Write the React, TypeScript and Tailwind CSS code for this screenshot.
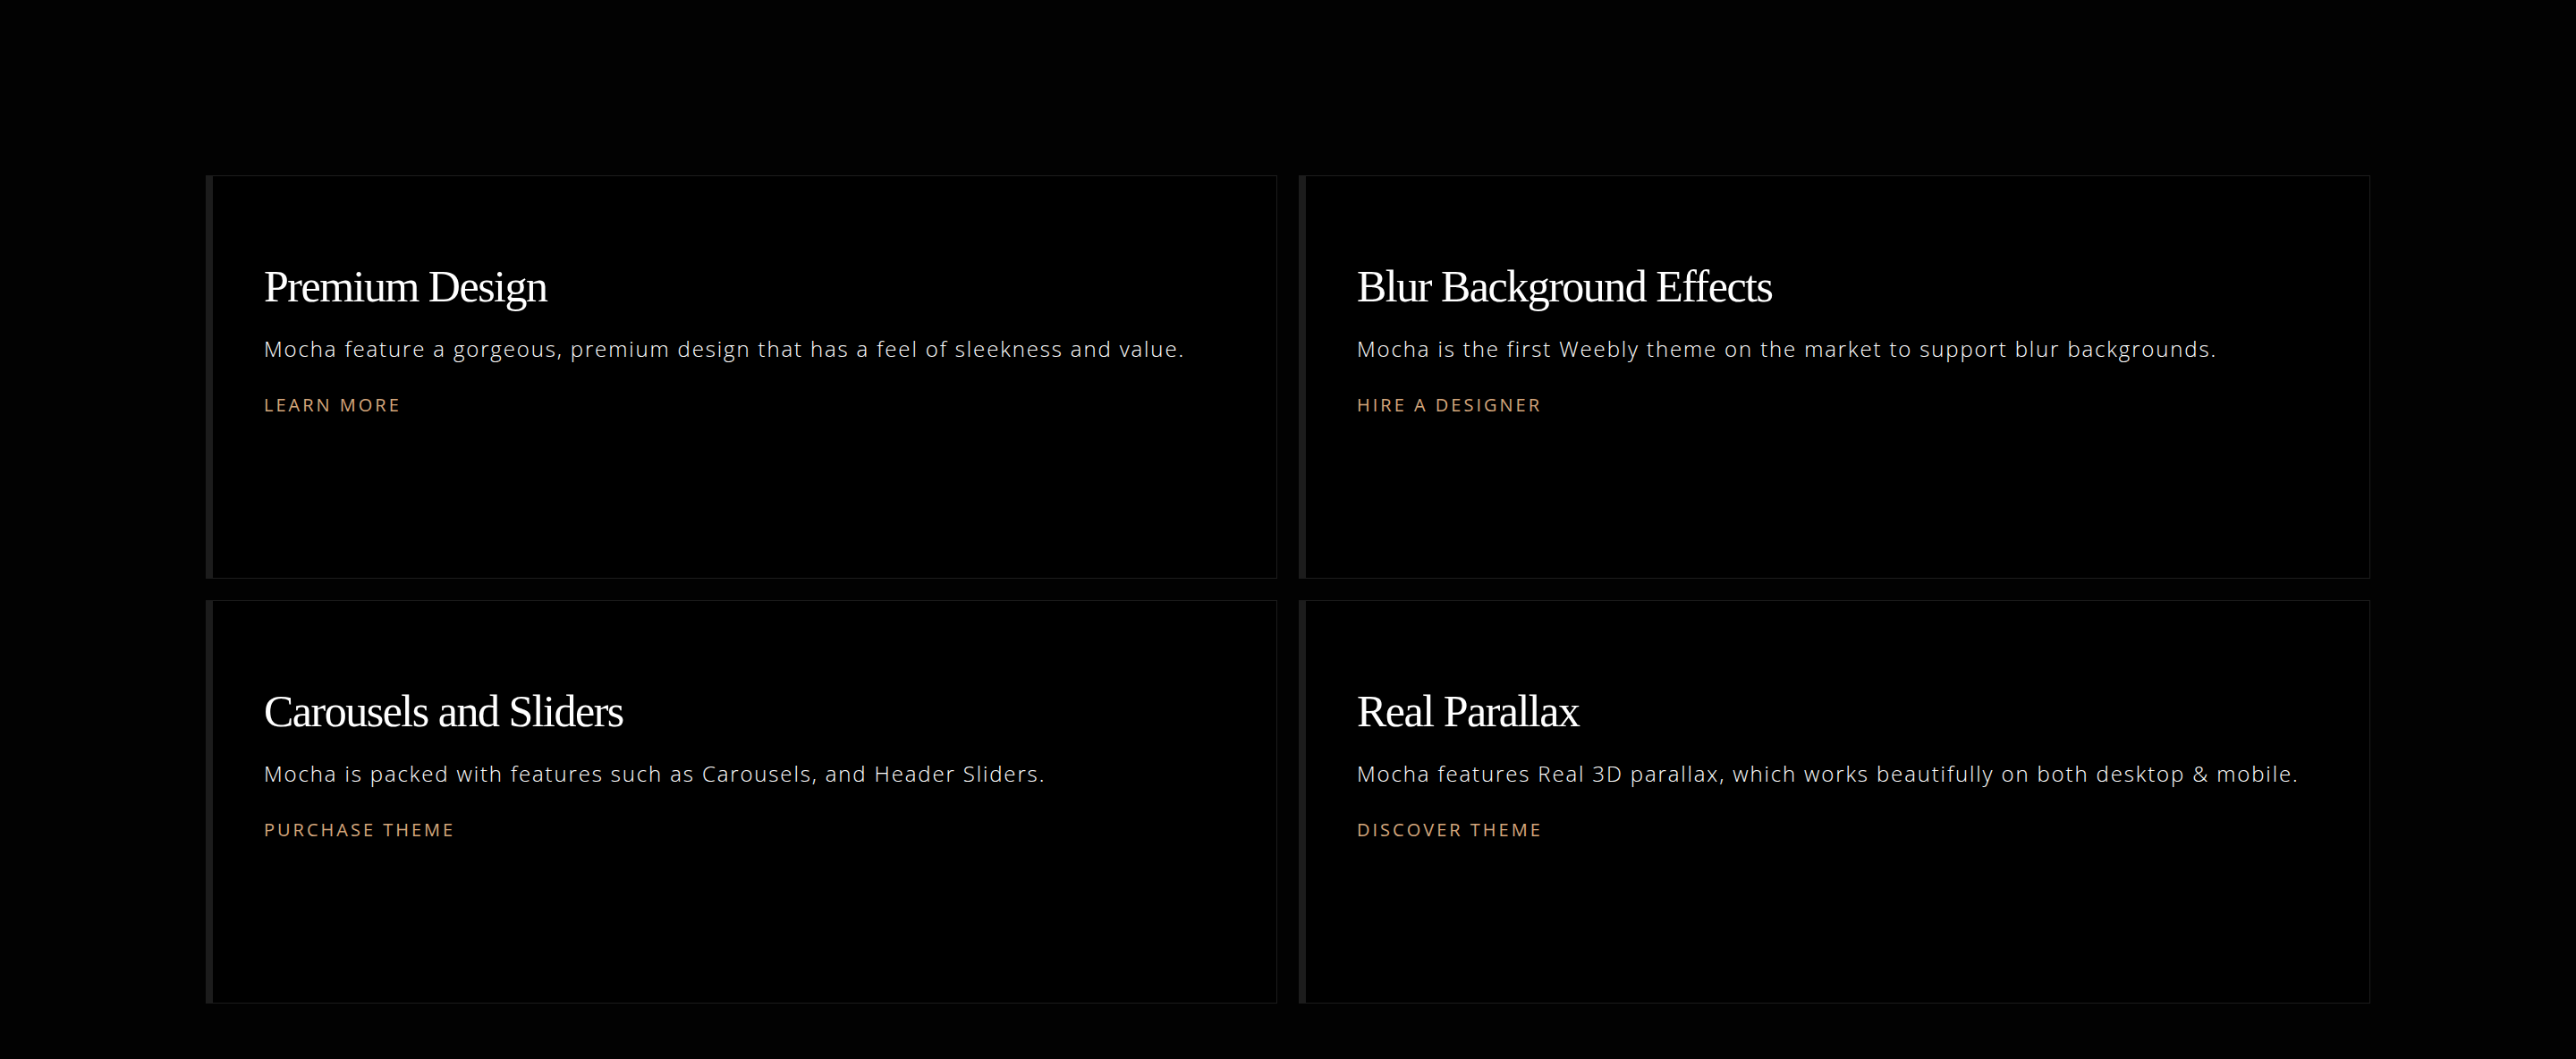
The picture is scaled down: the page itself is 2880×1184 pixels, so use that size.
import React from "react";

const cards = [
  {
    title: "Premium Design",
    body: "Mocha feature a gorgeous, premium design that has a feel of sleekness and value.",
    link: "LEARN MORE",
  },
  {
    title: "Blur Background Effects",
    body: "Mocha is the first Weebly theme on the market to support blur backgrounds.",
    link: "HIRE A DESIGNER",
  },
  {
    title: "Carousels and Sliders",
    body: "Mocha is packed with features such as Carousels, and Header Sliders.",
    link: "PURCHASE THEME",
  },
  {
    title: "Real Parallax",
    body: "Mocha features Real 3D parallax, which works beautifully on both desktop & mobile.",
    link: "DISCOVER THEME",
  },
];

export default function App() {
  return (
    <div className="min-h-[1184px] w-full bg-[#020202] pt-[196px] pb-[62px]">
      <div className="mx-auto grid w-[2420px] grid-cols-2 gap-6">
        {cards.map((c) => (
          <div
            key={c.title}
            className="h-[451px] border border-l-8 border-[#1c1c1c] bg-black pl-[57px] pt-[93px]"
          >
            <h2 className="font-['Liberation_Serif',serif] text-[50px] leading-[60px] font-normal tracking-[-1.5px] text-white">
              {c.title}
            </h2>
            <p className="mt-6 font-['Open_Sans',sans-serif] text-[24px] leading-[32px] font-light tracking-[1.85px] text-white">
              {c.body}
            </p>
            <a
              href="#"
              className="mt-[35px] block font-['Open_Sans',sans-serif] text-[20px] leading-[24px] font-medium tracking-[0.15em] text-[#d5a77c]"
            >
              {c.link}
            </a>
          </div>
        ))}
      </div>
    </div>
  );
}
